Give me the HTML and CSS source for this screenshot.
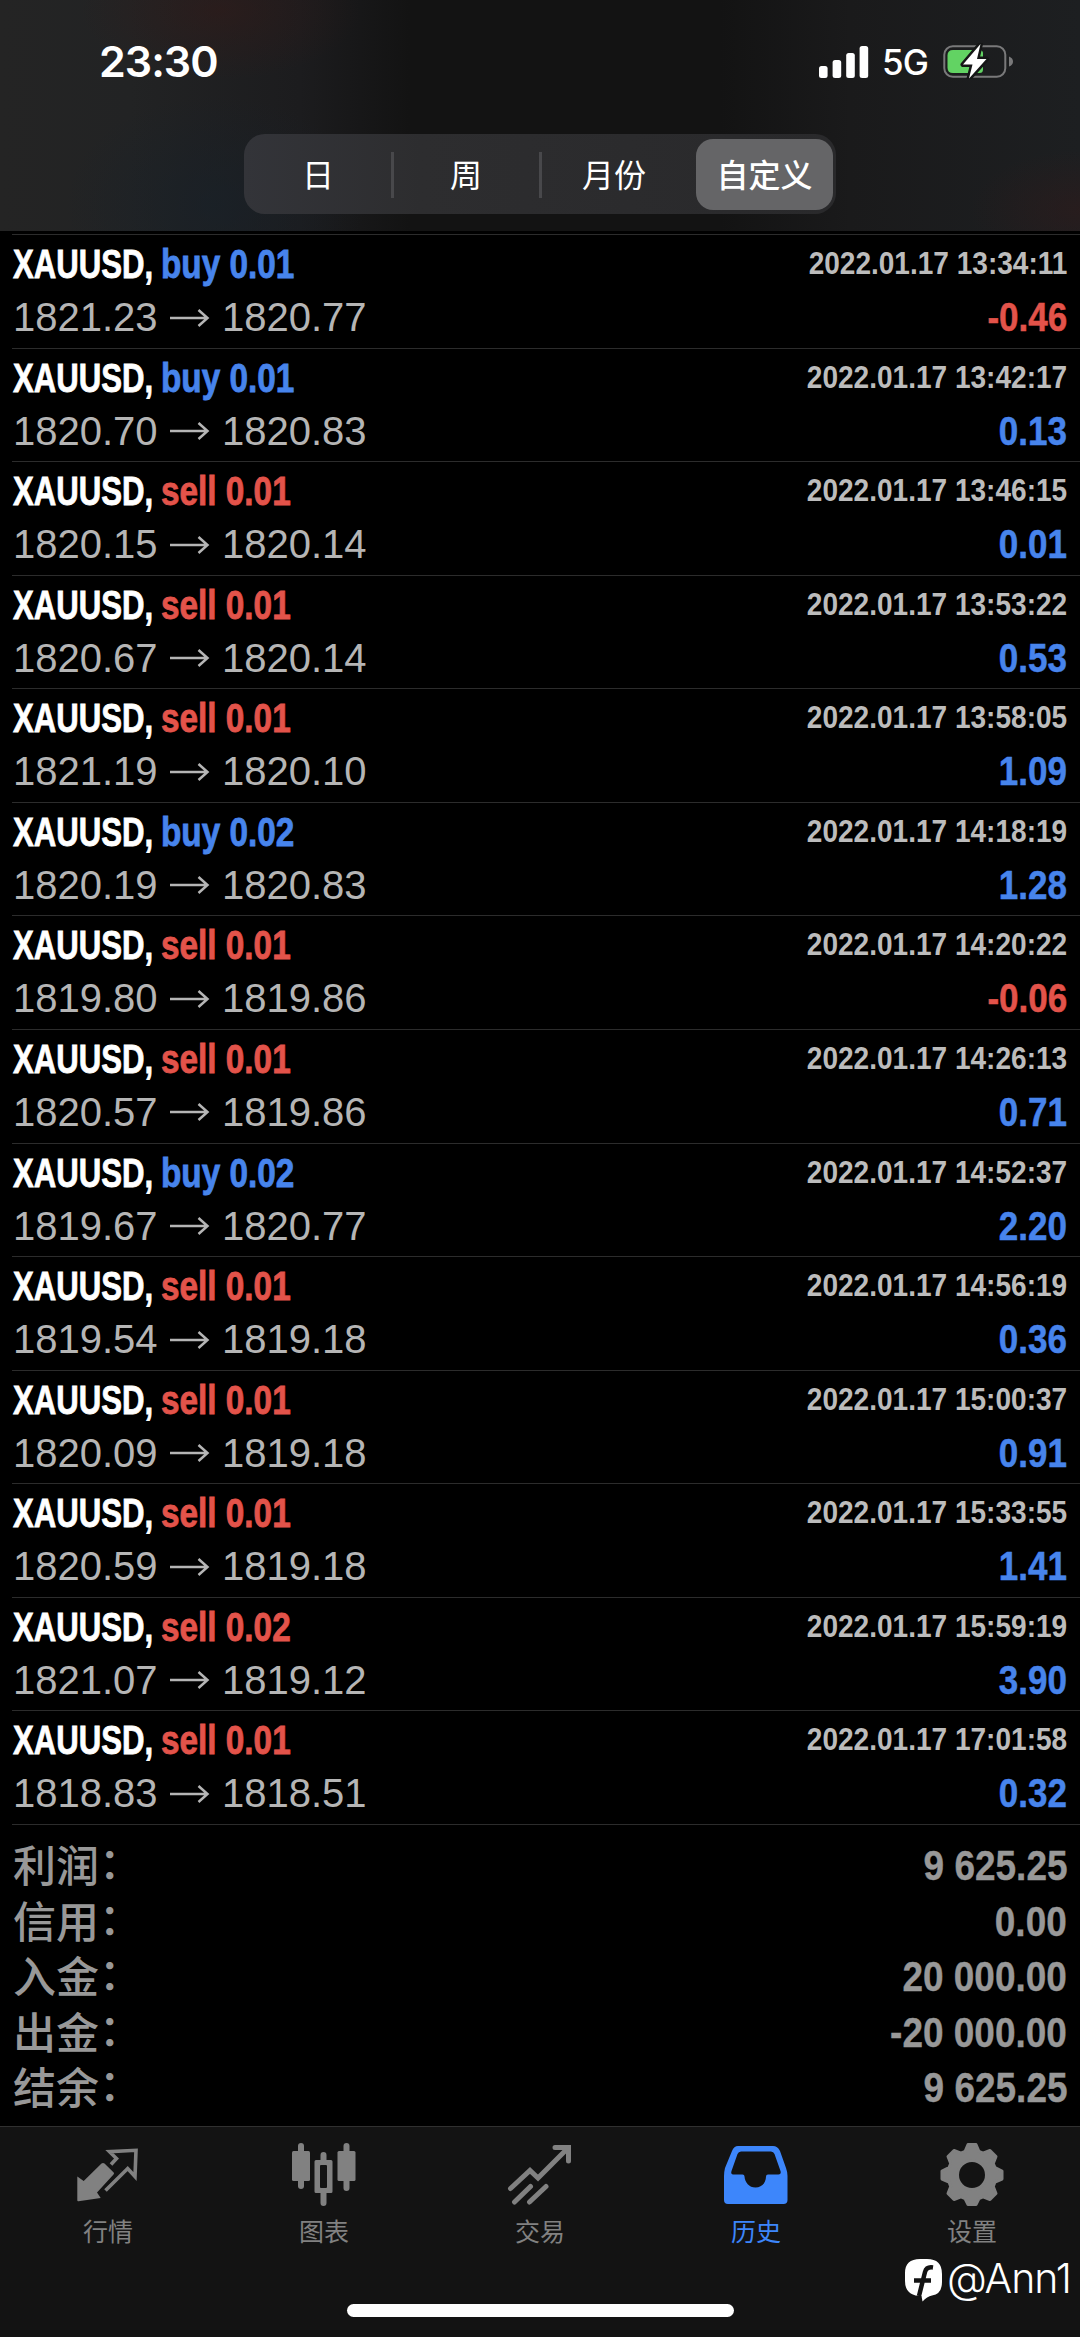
FILE: index.html
```html
<!DOCTYPE html>
<html lang="zh-CN">
<head>
<meta charset="utf-8">
<title>历史</title>
<link rel="stylesheet" href="styles.css">
</head>
<body>
<div class="screen">
  <header class="header">
    <div class="status">
      <span class="clock">23:30</span>
      <div class="indicators">
        <svg class="signal" viewBox="0 0 50 32" width="50" height="32"><rect x="0" y="20" width="8.6" height="12" rx="2.5"/><rect x="13.6" y="14" width="8.6" height="18" rx="2.5"/><rect x="27.2" y="7" width="8.6" height="25" rx="2.5"/><rect x="40.6" y="0" width="8.6" height="32" rx="2.5"/></svg>
        <span class="network">5G</span>
        <svg class="battery" viewBox="0 0 70 36" width="70" height="36"><rect x="1.3" y="3.2" width="61" height="30.6" rx="8.5" fill="none" stroke="#79797a" stroke-width="2"/><path d="M66 13.500q4 1.500 4 5t-4 5z" fill="#79797a"/><path d="M10 7H36.500q3.500 0 3.500 3.500v16q0 3.500-3.500 3.500H10q-5.500 0-5.500-5.500V12.500Q4.500 7 10 7z" fill="#62d363"/><path d="M37.500 1 20 21.500h9.500L26 35.500 43.500 16H34z" fill="#fff" stroke="#151616" stroke-width="5" stroke-linejoin="round" paint-order="stroke"/></svg>
      </div>
    </div>
    <nav class="segments">
      <span class="segment">日</span>
      <span class="segment divided">周</span>
      <span class="segment divided">月份</span>
      <span class="segment selected"><span class="thumb">自定义</span></span>
    </nav>
  </header>
  <main class="history">
    <div class="deal"><div class="title"><span class="symbol">XAUUSD,</span><span class="side buy">buy 0.01</span></div><time>2022.01.17 13:34:11</time><div class="prices"><span>1821.23</span><svg class="arrow" viewBox="0 0 40 20"><path d="M0 10H37M28.500 2 37.500 10 28.500 18"/></svg><span>1820.77</span></div><b class="result loss">-0.46</b></div>
    <div class="deal"><div class="title"><span class="symbol">XAUUSD,</span><span class="side buy">buy 0.01</span></div><time>2022.01.17 13:42:17</time><div class="prices"><span>1820.70</span><svg class="arrow" viewBox="0 0 40 20"><path d="M0 10H37M28.500 2 37.500 10 28.500 18"/></svg><span>1820.83</span></div><b class="result">0.13</b></div>
    <div class="deal"><div class="title"><span class="symbol">XAUUSD,</span><span class="side sell">sell 0.01</span></div><time>2022.01.17 13:46:15</time><div class="prices"><span>1820.15</span><svg class="arrow" viewBox="0 0 40 20"><path d="M0 10H37M28.500 2 37.500 10 28.500 18"/></svg><span>1820.14</span></div><b class="result">0.01</b></div>
    <div class="deal"><div class="title"><span class="symbol">XAUUSD,</span><span class="side sell">sell 0.01</span></div><time>2022.01.17 13:53:22</time><div class="prices"><span>1820.67</span><svg class="arrow" viewBox="0 0 40 20"><path d="M0 10H37M28.500 2 37.500 10 28.500 18"/></svg><span>1820.14</span></div><b class="result">0.53</b></div>
    <div class="deal"><div class="title"><span class="symbol">XAUUSD,</span><span class="side sell">sell 0.01</span></div><time>2022.01.17 13:58:05</time><div class="prices"><span>1821.19</span><svg class="arrow" viewBox="0 0 40 20"><path d="M0 10H37M28.500 2 37.500 10 28.500 18"/></svg><span>1820.10</span></div><b class="result">1.09</b></div>
    <div class="deal"><div class="title"><span class="symbol">XAUUSD,</span><span class="side buy">buy 0.02</span></div><time>2022.01.17 14:18:19</time><div class="prices"><span>1820.19</span><svg class="arrow" viewBox="0 0 40 20"><path d="M0 10H37M28.500 2 37.500 10 28.500 18"/></svg><span>1820.83</span></div><b class="result">1.28</b></div>
    <div class="deal"><div class="title"><span class="symbol">XAUUSD,</span><span class="side sell">sell 0.01</span></div><time>2022.01.17 14:20:22</time><div class="prices"><span>1819.80</span><svg class="arrow" viewBox="0 0 40 20"><path d="M0 10H37M28.500 2 37.500 10 28.500 18"/></svg><span>1819.86</span></div><b class="result loss">-0.06</b></div>
    <div class="deal"><div class="title"><span class="symbol">XAUUSD,</span><span class="side sell">sell 0.01</span></div><time>2022.01.17 14:26:13</time><div class="prices"><span>1820.57</span><svg class="arrow" viewBox="0 0 40 20"><path d="M0 10H37M28.500 2 37.500 10 28.500 18"/></svg><span>1819.86</span></div><b class="result">0.71</b></div>
    <div class="deal"><div class="title"><span class="symbol">XAUUSD,</span><span class="side buy">buy 0.02</span></div><time>2022.01.17 14:52:37</time><div class="prices"><span>1819.67</span><svg class="arrow" viewBox="0 0 40 20"><path d="M0 10H37M28.500 2 37.500 10 28.500 18"/></svg><span>1820.77</span></div><b class="result">2.20</b></div>
    <div class="deal"><div class="title"><span class="symbol">XAUUSD,</span><span class="side sell">sell 0.01</span></div><time>2022.01.17 14:56:19</time><div class="prices"><span>1819.54</span><svg class="arrow" viewBox="0 0 40 20"><path d="M0 10H37M28.500 2 37.500 10 28.500 18"/></svg><span>1819.18</span></div><b class="result">0.36</b></div>
    <div class="deal"><div class="title"><span class="symbol">XAUUSD,</span><span class="side sell">sell 0.01</span></div><time>2022.01.17 15:00:37</time><div class="prices"><span>1820.09</span><svg class="arrow" viewBox="0 0 40 20"><path d="M0 10H37M28.500 2 37.500 10 28.500 18"/></svg><span>1819.18</span></div><b class="result">0.91</b></div>
    <div class="deal"><div class="title"><span class="symbol">XAUUSD,</span><span class="side sell">sell 0.01</span></div><time>2022.01.17 15:33:55</time><div class="prices"><span>1820.59</span><svg class="arrow" viewBox="0 0 40 20"><path d="M0 10H37M28.500 2 37.500 10 28.500 18"/></svg><span>1819.18</span></div><b class="result">1.41</b></div>
    <div class="deal"><div class="title"><span class="symbol">XAUUSD,</span><span class="side sell">sell 0.02</span></div><time>2022.01.17 15:59:19</time><div class="prices"><span>1821.07</span><svg class="arrow" viewBox="0 0 40 20"><path d="M0 10H37M28.500 2 37.500 10 28.500 18"/></svg><span>1819.12</span></div><b class="result">3.90</b></div>
    <div class="deal"><div class="title"><span class="symbol">XAUUSD,</span><span class="side sell">sell 0.01</span></div><time>2022.01.17 17:01:58</time><div class="prices"><span>1818.83</span><svg class="arrow" viewBox="0 0 40 20"><path d="M0 10H37M28.500 2 37.500 10 28.500 18"/></svg><span>1818.51</span></div><b class="result">0.32</b></div>
  </main>
  <section class="summary">
    <div class="total"><span class="label">利润<i class="colon">：</i></span><b>9 625.25</b></div>
    <div class="total"><span class="label">信用<i class="colon">：</i></span><b>0.00</b></div>
    <div class="total"><span class="label">入金<i class="colon">：</i></span><b>20 000.00</b></div>
    <div class="total"><span class="label">出金<i class="colon">：</i></span><b>-20 000.00</b></div>
    <div class="total"><span class="label">结余<i class="colon">：</i></span><b>9 625.25</b></div>
  </section>
  <footer class="tabbar">
    <nav class="tabs">
      <a class="tab"><svg viewBox="0 0 66 66"><path d="M2.300 28.500 8.700 33 26.500 15.500Q28 14.300 29.500 15.500L38.700 24.500Q39.500 25.500 38.500 26.500L22 44.500 25.700 50 3.500 53.300Q2.300 53.500 2.300 52.300z" fill="currentColor"/><path d="M36 16.500 41.500 10.500 34.500 3.700 61 2.300 60 28.500 52.700 20.500 30.500 42.500" fill="none" stroke="currentColor" stroke-width="3.600"/></svg><span>行情</span></a>
      <a class="tab"><svg viewBox="0 0 66 66"><g fill="currentColor"><rect x="7" y="-5" width="6" height="46" rx="3"/><rect x="1" y="3" width="18" height="30" rx="1.500"/><rect x="52.500" y="-5" width="6" height="48" rx="3"/><rect x="46.500" y="3" width="18" height="30" rx="1.500"/><path fill-rule="evenodd" d="M29.500 12V7q0-3 3-3t3 3v5H40q1.500 0 1.500 1.500v30q0 1.500-1.500 1.500h-4.500v10q0 3-3 3t-3-3V45H25q-1.500 0-1.500-1.500v-30Q23.500 12 25 12zM29 18q0-1 1-1h5q1 0 1 1v21q0 1-1 1h-5q-1 0-1-1z"/></g></svg><span>图表</span></a>
      <a class="tab"><svg viewBox="0 0 66 66"><path d="M3.500 40.500 23 22.500 31 30 61 0M48-.5H61.500V13M7.500 54 23.500 38.500M22.500 54 39 38.500" fill="none" stroke="currentColor" stroke-width="5" stroke-linecap="round"/></svg><span>交易</span></a>
      <a class="tab active"><svg viewBox="0 0 66 66"><path fill="currentColor" fill-rule="evenodd" d="M15-2H50Q54.500-2 57 3L63 20Q64.500 24 64.500 28V52Q64.500 56 60.500 56H5Q1 56 1 52V28Q1 24 2 20L9 3Q11-2 15-2zM18 3.500Q15.500 3.500 14.500 6L8.500 23Q7.500 26.500 10 26.500H19.500Q21.500 26.500 21.500 28.500C22 34.500 26 39.500 32.500 39.500S43 34.500 43 28.500Q43 26.500 45 26.500H55.500Q58.500 26.500 57.500 23L51.500 6Q50.500 3.500 48 3.500z"/></svg><span>历史</span></a>
      <a class="tab"><svg viewBox="0 0 66 66"><path fill="currentColor" stroke="currentColor" stroke-width="3" stroke-linejoin="round" fill-rule="evenodd" d="M29-3.500h8l3 7 4 1.700 7-2.700 6 6-2.700 7L56 19.500l7 3.500v8l-7 3-1.700 4.500L57 45.500l-6 6-7-2.700L40 50.500l-3 6h-8l-3-6-4-1.700-7 2.700-6-6 2.700-7L10 34l-7-3v-8l7-3.500 1.700-4L9 8.500l6-6 7 2.700L26 3.500zM33 12.500a14.500 14.500 0 1 0 0 29 14.500 14.500 0 0 0 0-29z"/></svg><span>设置</span></a>
    </nav>
    <div class="home"></div>
  </footer>
  <div class="watermark"><svg viewBox="0 0 38 43" width="38" height="43"><path d="M15 0h7Q37 0 37 15v8q0 12-10 13.500Q22 37.500 17.500 42.500L16.500 37Q0 37 0 22v-8Q0 0 15 0z" fill="#fff"/><path d="M28 8.500q-6.500-1-8 4.500L14 37M9 21.500H26" fill="none" stroke="#131313" stroke-width="4.500"/></svg><span>@Ann1</span></div>
</div>
</body>
</html>
```
FILE: styles.css
```css
* { box-sizing: border-box; }
body { margin: 0; background: #000; font-family: "Liberation Sans", "Noto Sans CJK SC", sans-serif; }
.screen { position: relative; width: 1080px; height: 2337px; display: flex; flex-direction: column; overflow: hidden; background: #000; }

.header {
  height: 231px;
  background:
    radial-gradient(ellipse 140px 70px at 220px 10px, rgba(55, 25, 22, .45), transparent),
    radial-gradient(ellipse 150px 110px at 215px 205px, rgba(23, 33, 42, .6), transparent),
    radial-gradient(ellipse 110px 60px at 1080px 210px, rgba(50, 26, 26, .5), transparent),
    linear-gradient(90deg, #242424 0, #222324 130px, #1c1c1e 300px, #131313 410px, #131313 720px, #1a1a1b 850px, #1d1f21 1080px);
}
.status { height: 134px; padding: 0 67px 0 99px; display: flex; justify-content: space-between; }
.clock { font: 600 43px/62px Inter, sans-serif; color: #fff; padding-top: 30px; letter-spacing: -1px; }
.indicators { display: flex; align-items: flex-start; padding-top: 43px; color: #fff; }
.signal { margin-top: 2.500px; fill: #fff; }
.network { width: 74px; padding-left: 13px; font: 500 35px/39px Inter, sans-serif; letter-spacing: -1px; }

.segments { width: 592px; height: 80px; margin-left: 244px; border-radius: 21px; display: grid; grid-template-columns: repeat(4, 1fr); background: linear-gradient(90deg, #333439, #2d2d2f 30%, #29292b); }
.segment { display: flex; align-items: center; justify-content: center; position: relative; padding-bottom: 3px; font: 400 32px/40px "Noto Sans CJK SC", sans-serif; color: #fff; }
.divided::before { content: ""; position: absolute; left: -1px; top: 18px; width: 2.500px; height: 46px; background: #48484b; }
.selected { padding-bottom: 0; }
.thumb { width: 137px; height: 71px; padding-bottom: 3px; border-radius: 17px; background: #656567; display: flex; align-items: center; justify-content: center; font-weight: 500; margin-left: 5px; }

.history { height: 1591px; margin: 3px 0 0 12px; border-bottom: 1px solid #2c2c2c; display: grid; grid-template-rows: repeat(14, 1fr); }
.deal { border-top: 1px solid #2c2c2c; padding: 3px 13px 0 1px; display: grid; grid-template-columns: 1fr auto; grid-template-rows: 53px 53px; font-size: 40px; line-height: 53px; min-height: 0; white-space: nowrap; }
.title { display: flex; font-weight: 700; -webkit-text-stroke: .8px; }
.symbol { width: 148px; color: #fff; transform: scaleX(.778); transform-origin: left; }
.side { transform: scaleX(.833); transform-origin: left; }
.buy { color: #4784ec; }
.sell { color: #e3534a; }
time { justify-self: end; font-size: 32px; font-weight: 700; line-height: 50px; color: #bcbcbc; transform: scaleX(.876); transform-origin: right; }
.prices { display: flex; align-items: center; color: #b5b5b5; font-size: 40px; }
.prices span { width: 144px; }
.arrow { width: 40px; height: 20px; margin: 0 12px 0 13px; fill: none; stroke: #b5b5b5; stroke-width: 2.500; }
.result { justify-self: end; color: #4784ec; transform: scaleX(.875); transform-origin: right; -webkit-text-stroke: .5px; }
.loss { color: #e3534a; }

.summary { height: 301px; padding: 11px 13px 0 13px; color: #989898; }
.total { height: 55.600px; display: flex; justify-content: space-between; }
.label { font: 500 43px/54px "Noto Sans CJK SC", sans-serif; }
.total b { font-size: 42px; line-height: 60px; transform: scaleX(.88); transform-origin: right; -webkit-text-stroke: .4px; }
.colon { display: inline-block; font-style: normal; transform: translateY(-3px); }

.tabbar { flex: 1; border-top: 1px solid #303030; background: #131313; }
.tabs { display: grid; grid-template-columns: repeat(5, 1fr); padding-top: 21px; }
.tab { display: flex; flex-direction: column; align-items: center; color: #818181; }
.tab svg { width: 66px; height: 66px; overflow: visible; }
.tab span { font: 400 25px/32px "Noto Sans CJK SC", sans-serif; }
.active { color: #3d86fb; }
.home { width: 387px; height: 13px; margin: 58px auto 0; border-radius: 7px; background: #fff; }

.watermark { position: absolute; left: 905px; top: 2259px; display: flex; gap: 4px; color: #fff; }
.watermark span { font: 300 41px/38px Inter, sans-serif; letter-spacing: -1px; }
```
